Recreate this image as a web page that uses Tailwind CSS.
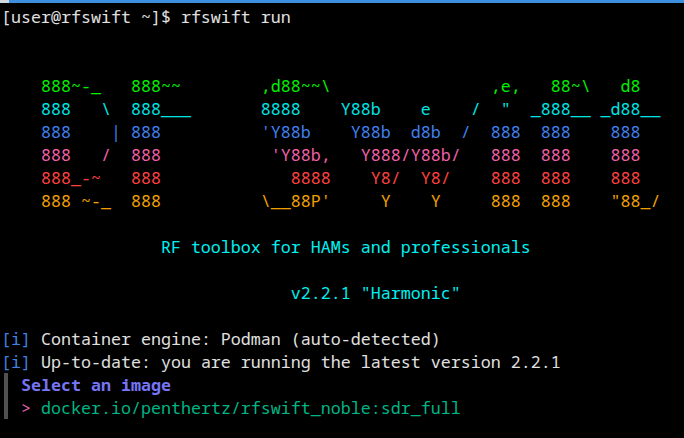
<!doctype html>
<html><head><meta charset="utf-8"><script src="https://cdn.jsdelivr.net/npm/@tailwindcss/browser@4"></script></head>
<body class="bg-black">
<div class="h-[438px] w-[684px] overflow-hidden bg-black font-['Noto_Sans_Mono','DejaVu_Sans_Mono',monospace] text-[16.67px] leading-[23px] text-[#e0e0e0]">
<div class="flex h-[3px]"><div class="w-[9px] bg-[#d0d8e0]"></div><div class="flex-1 bg-[#3d8fe0]"></div></div>
<pre class="pl-[1px] pt-[2px] font-['Noto_Sans_Mono','DejaVu_Sans_Mono',monospace]">[user@rfswift ~]$ rfswift run


<span class="text-[#00f000]">    888~-_   888~~        ,d88~~\                ,e,   88~\   d8</span>
<span class="text-[#00e5e5]">    888   \  888___       8888    Y88b    e    /  "  _888__ _d88__</span>
<span class="text-[#4080f0]">    888    | 888          'Y88b    Y88b  d8b  /  888  888    888</span>
<span class="text-[#f060a8]">    888   /  888           'Y88b,   Y888/Y88b/   888  888    888</span>
<span class="text-[#ff4040]">    888_-~   888             8888    Y8/  Y8/    888  888    888</span>
<span class="text-[#f0a000]">    888 ~-_  888          \__88P'     Y    Y     888  888    "88_/</span>

<span class="text-[#00f0f0]">                RF toolbox for HAMs and professionals</span>

<span class="text-[#00f0f0]">                             v2.2.1 "Harmonic"</span>

<span class="text-[#4080e0]">[i]</span> Container engine: Podman (auto-detected)
<span class="text-[#4080e0]">[i]</span> Up-to-date: you are running the latest version 2.2.1</pre>
<div class="ml-[4px] border-l-[4px] border-[#505050] pl-[13px]">
<div class="font-bold text-[#7575f5]">Select an image</div>
<div class="whitespace-pre"><span class="text-[#e060b0]">&gt;</span> <span class="text-[#00b585]">docker.io/penthertz/rfswift_noble:sdr_full</span></div>
</div>
</div>
</body></html>
